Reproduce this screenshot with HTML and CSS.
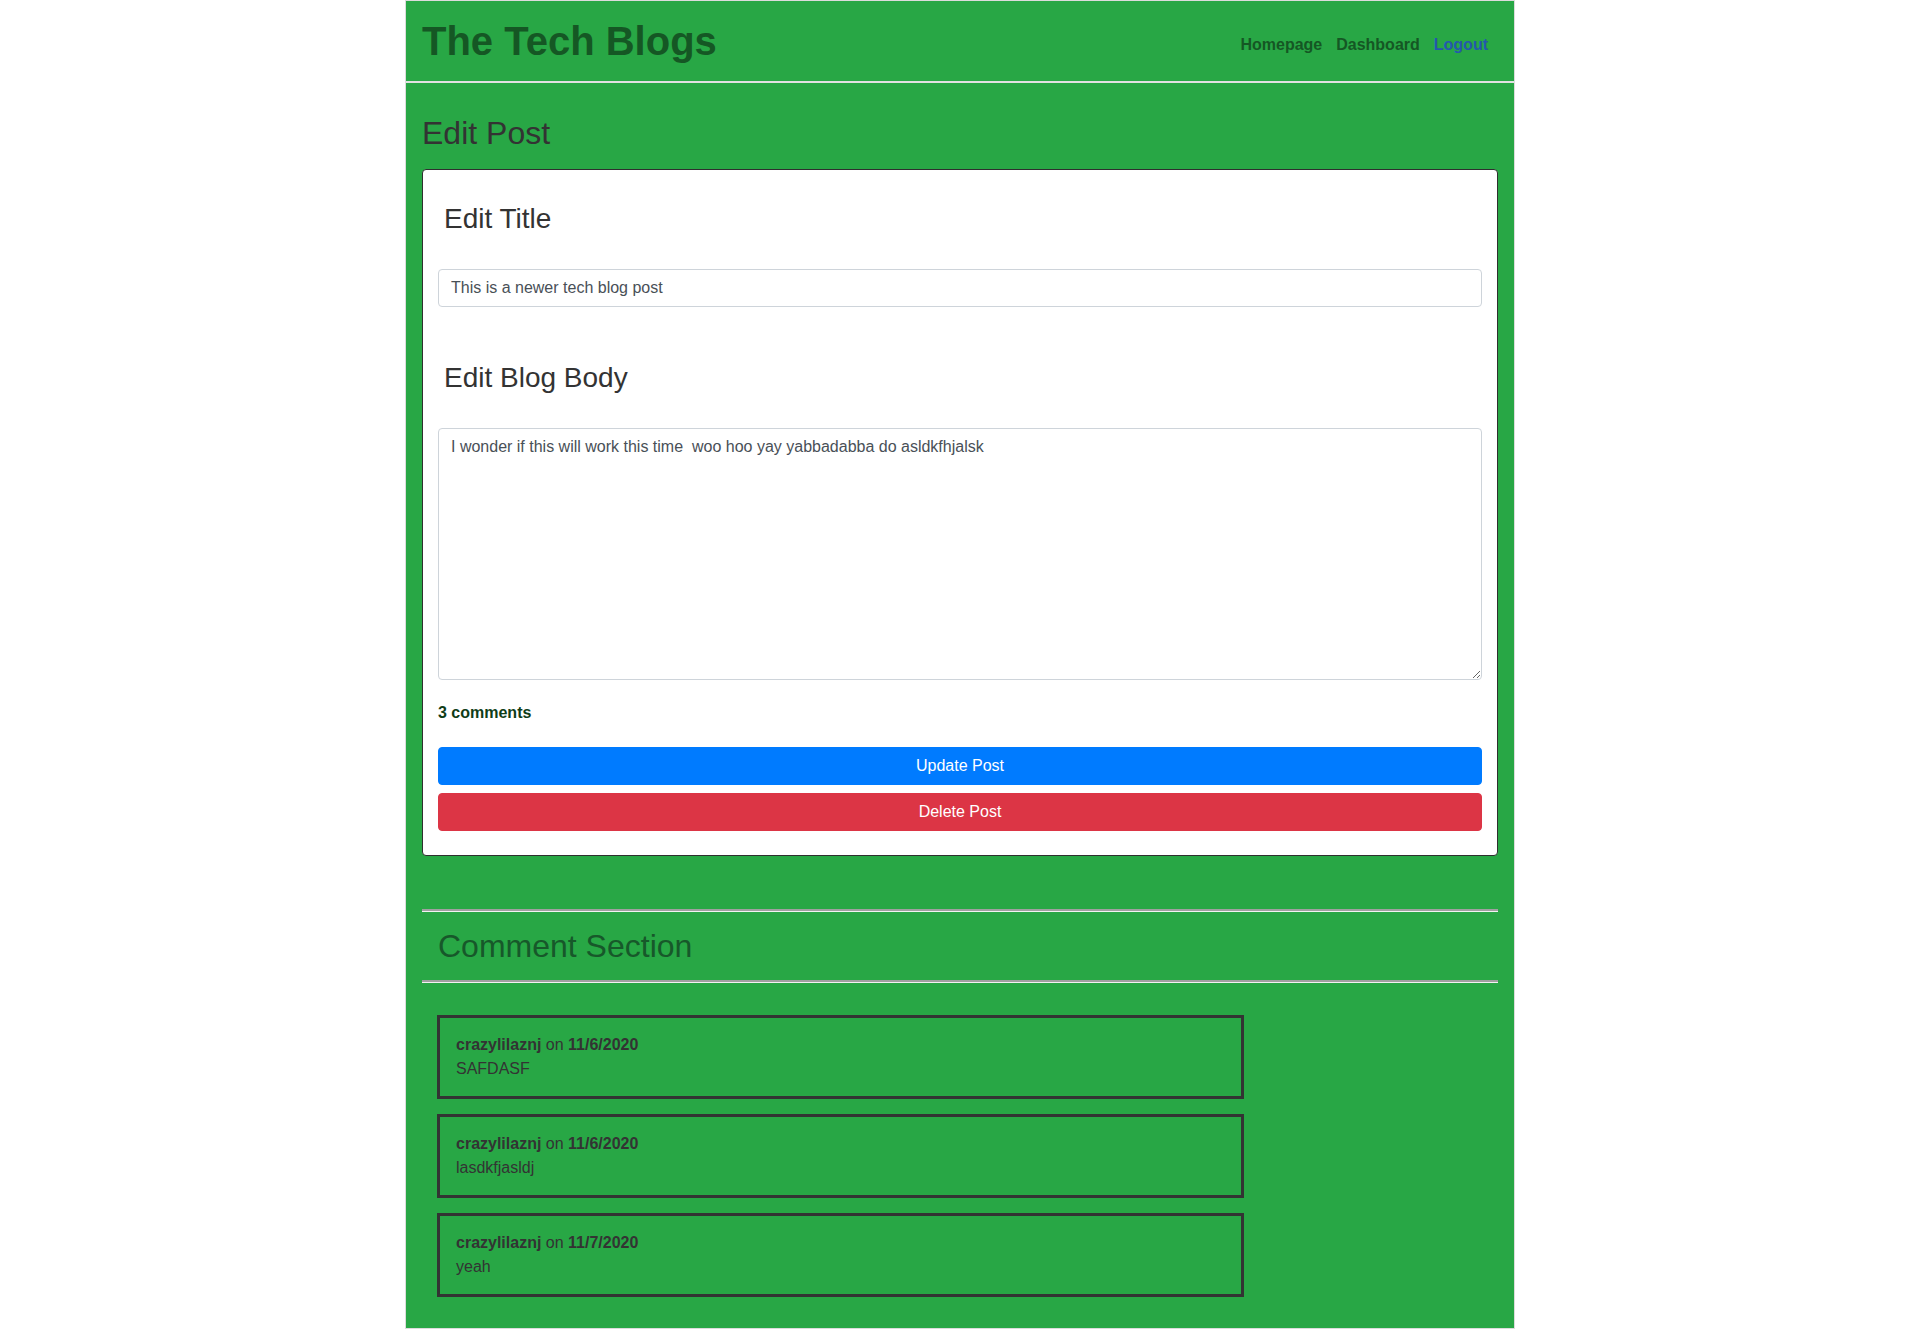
FILE: index.html
```html
<!DOCTYPE html>
<html lang="en">
<head>
<meta charset="utf-8">
<title>The Tech Blogs</title>
<link rel="stylesheet" href="styles.css">
</head>
<body>
<div class="page">
  <header class="site-header">
    <h1 class="brand">The Tech Blogs</h1>
    <nav class="nav">
      <a class="nav-link" href="#">Homepage</a>
      <a class="nav-link" href="#">Dashboard</a>
      <a class="nav-link nav-logout" href="#">Logout</a>
    </nav>
  </header>
  <main class="content">
    <h2 class="page-title">Edit Post</h2>
    <div class="card">
      <form class="card-body">
        <div class="group">
          <h3 class="field-label">Edit Title</h3>
          <input class="form-control" type="text" value="This is a newer tech blog post">
        </div>
        <div class="group group-body">
          <h3 class="field-label">Edit Blog Body</h3>
          <textarea class="form-control textarea">I wonder if this will work this time  woo hoo yay yabbadabba do asldkfhjalsk</textarea>
        </div>
        <p class="count">3 comments</p>
        <button type="button" class="btn btn-primary">Update Post</button>
        <button type="button" class="btn btn-danger">Delete Post</button>
      </form>
    </div>
    <section class="comments">
      <hr class="rule">
      <h2 class="section-title">Comment Section</h2>
      <hr class="rule">
      <div class="comment-list">
        <div class="comment">
          <div><b>crazylilaznj</b> on <b>11/6/2020</b></div>
          <div>SAFDASF</div>
        </div>
        <div class="comment">
          <div><b>crazylilaznj</b> on <b>11/6/2020</b></div>
          <div>lasdkfjasldj</div>
        </div>
        <div class="comment">
          <div><b>crazylilaznj</b> on <b>11/7/2020</b></div>
          <div>yeah</div>
        </div>
      </div>
    </section>
  </main>
</div>
</body>
</html>
```

FILE: styles.css
```css
* { box-sizing: border-box; }

html, body {
  margin: 0;
  padding: 0;
  background: #ffffff;
}

body {
  font-family: "Liberation Sans", Arial, Helvetica, sans-serif;
  font-size: 16px;
  line-height: 24px;
  color: #333333;
}

.page {
  width: 1110px;
  margin: 0 auto;
  background: #28a745;
  border: 1px solid #dcdcdc;
}

.site-header {
  display: flex;
  justify-content: space-between;
  align-items: flex-end;
  padding: 16px;
  border-bottom: 2px solid #e2e2e2;
}

.brand {
  margin: 0;
  font-size: 40px;
  line-height: 48px;
  font-weight: 700;
  color: #155724;
}

.nav {
  display: flex;
  gap: 14px;
  margin: 0 10px 8px 0;
}

.nav-link {
  font-weight: 700;
  font-size: 16px;
  line-height: 24px;
  color: #155724;
  text-decoration: none;
}

.nav-logout {
  color: #2458ad;
}

.content {
  padding: 0 16px 31px;
}

.page-title {
  margin: 31px 0 17px;
  font-size: 32px;
  line-height: 38px;
  font-weight: 400;
  color: #333333;
}

.card {
  background: #ffffff;
  border: 1px solid #2f2f2f;
  border-radius: 4px;
}

.card-body {
  margin: 0;
  padding: 15px 15px 24px;
}

.group-body {
  margin-top: 54px;
}

.field-label {
  margin: 17px 0 34px;
  padding-left: 6px;
  font-size: 28px;
  line-height: 33px;
  font-weight: 400;
  color: #333333;
}

.form-control {
  display: block;
  width: 100%;
  height: 38px;
  padding: 6px 12px;
  font-family: inherit;
  font-size: 16px;
  line-height: 24px;
  color: #495057;
  background: #ffffff;
  border: 1px solid #ced4da;
  border-radius: 4px;
  margin: 0;
}

.textarea {
  height: 252px;
  resize: vertical;
}

.count {
  margin: 21px 0 22px;
  font-weight: 700;
  color: #0f3d18;
}

.btn {
  display: block;
  width: 100%;
  height: 38px;
  padding: 6px 12px;
  font-family: inherit;
  font-size: 16px;
  line-height: 24px;
  color: #ffffff;
  border: 1px solid transparent;
  border-radius: 4px;
  text-align: center;
}

.btn + .btn {
  margin-top: 8px;
}

.btn-primary {
  background: #007bff;
  border-color: #007bff;
}

.btn-danger {
  background: #dc3545;
  border-color: #dc3545;
}

.comments {
  margin-top: 53px;
}

.rule {
  margin: 0;
  height: 0;
  border: 0;
  border-top: 2px solid #a0a0a0;
  border-bottom: 1px solid #f2f2f2;
}

.section-title {
  margin: 15px 0;
  padding-left: 16px;
  font-size: 32px;
  line-height: 38px;
  font-weight: 400;
  color: #17582a;
}

.comment-list {
  display: flex;
  flex-direction: column;
  gap: 15px;
  margin-top: 32px;
  padding-left: 15px;
}

.comment {
  width: 807px;
  border: 3px solid #333333;
  padding: 15px 16px;
  color: #333333;
}
```
